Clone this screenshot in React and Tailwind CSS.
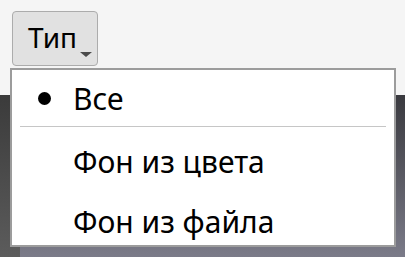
import React from 'react';

const items = [
  { label: 'Все', checked: true, h: 'h-[56px]' },
  { sep: true },
  { label: 'Фон из цвета', h: 'h-[60px]' },
  { label: 'Фон из файла', h: 'h-[60px]' },
];

export default function App() {
  return (
    <div className="relative w-[405px] h-[257px] overflow-hidden bg-[#f5f5f5]" style={{ fontFamily: '"Noto Sans", "Open Sans", sans-serif' }}>
      <div className="h-[95px] pt-[11px] pl-[12px]">
        <button className="relative flex items-center w-[86px] h-[55px] rounded-[4px] border border-[#acacac] bg-[#e1e1e1] pl-[15px] pb-[3px] text-[28px] leading-none text-black">
          Тип
          <span className="absolute left-[67px] bottom-[8px] w-0 h-0 border-l-[6px] border-r-[6px] border-t-[5px] border-l-transparent border-r-transparent border-t-[#4a4a4a]" />
        </button>
      </div>
      <div className="flex h-[162px]">
        <div className="w-[20px] bg-gradient-to-b from-[#3b3b3b] to-[#5c5c5c]" />
        <div className="flex-1 bg-gradient-to-b from-[#3a3a3f] to-[#7b7b89]" />
      </div>

      <div className="absolute left-[10px] top-[68px] w-[386px] h-[179px] overflow-hidden border-2 border-[#9c9c9c] bg-white">
        {items.map((it, i) =>
          it.sep ? (
            <div key={i} className="mx-[8px] mb-[4px] h-px bg-[#c6c6c6]" />
          ) : (
            <div key={i} className={`relative flex items-center ${it.h} pl-[61px] text-[30px] text-black`}>
              {it.checked && <span className="absolute left-[26px] w-[13px] h-[13px] rounded-full bg-black" />}
              {it.label}
            </div>
          )
        )}
      </div>
    </div>
  );
}
